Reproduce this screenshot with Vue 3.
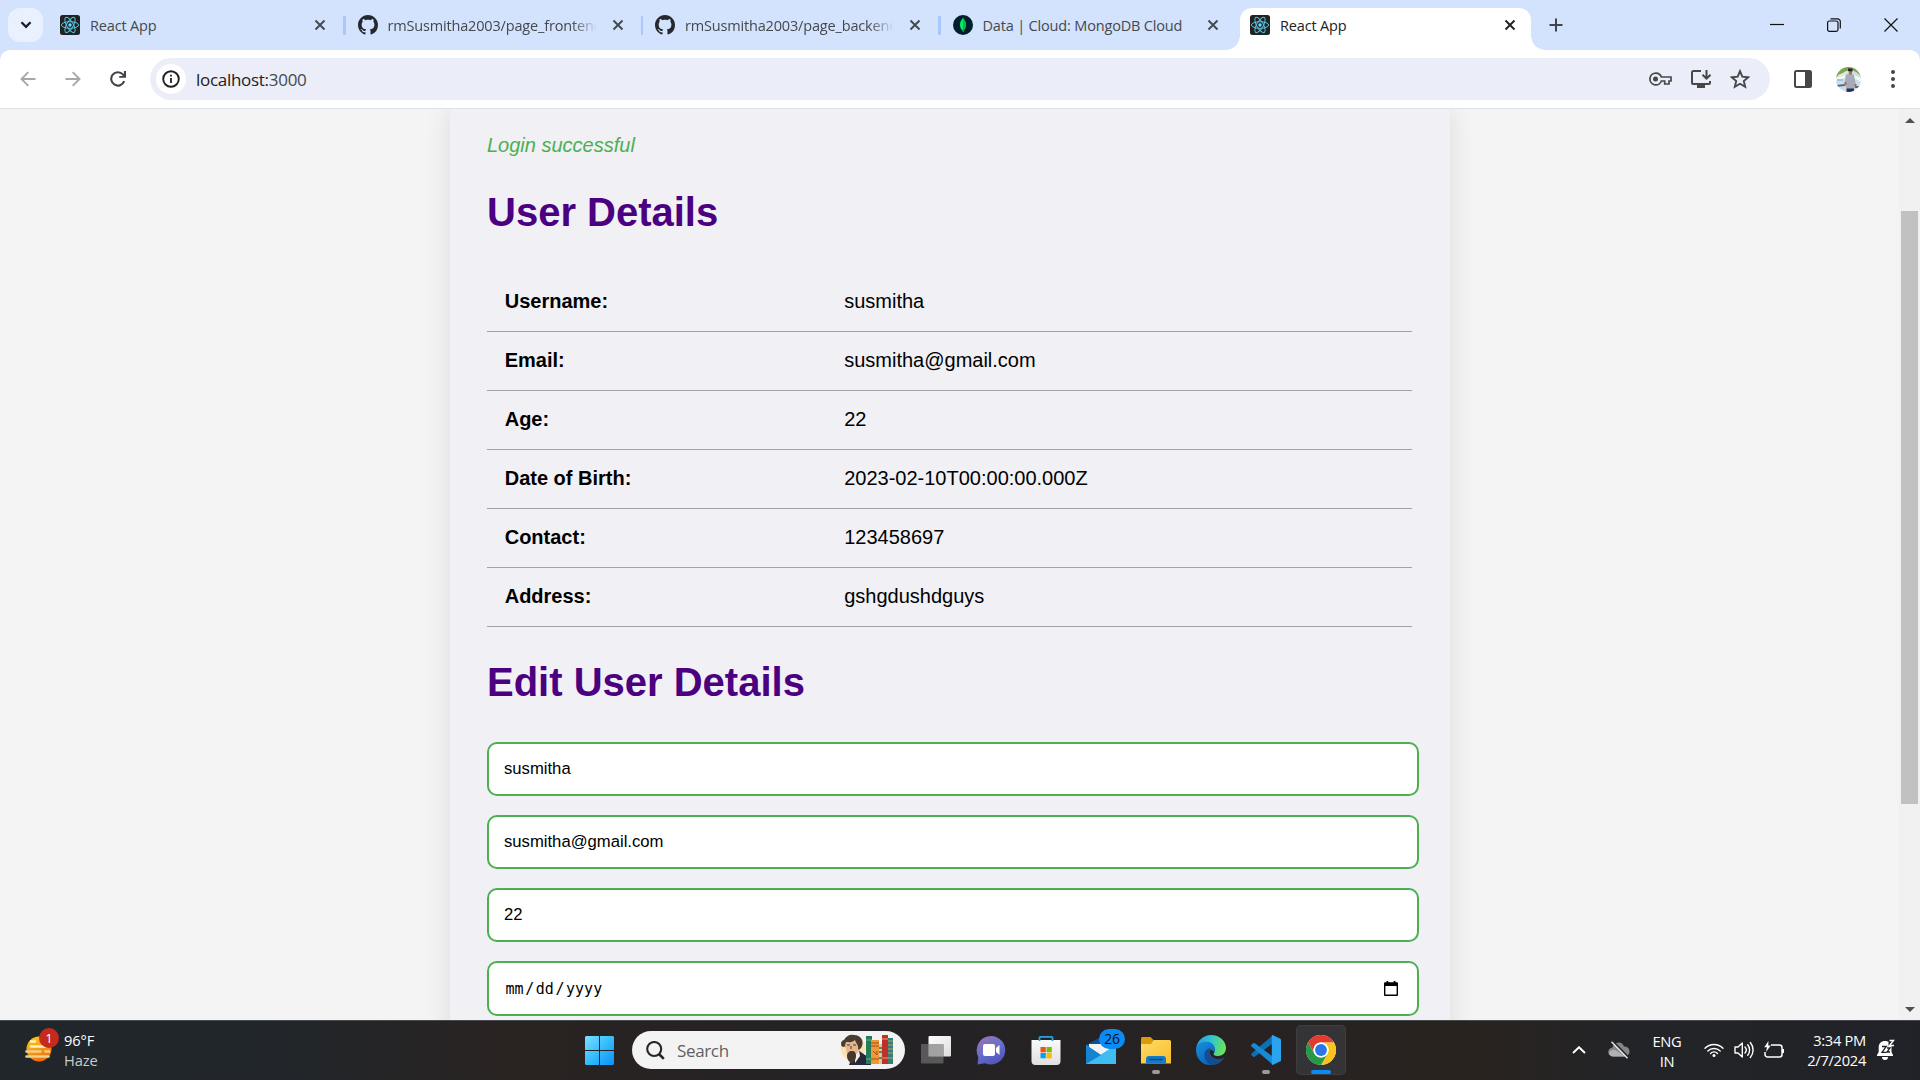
<script setup>
const tabs = [
  { icon: 'react', title: 'React App' },
  { icon: 'github', title: 'rmSusmitha2003/page_frontend', long: true },
  { icon: 'github', title: 'rmSusmitha2003/page_backend', long: true },
  { icon: 'mongo', title: 'Data | Cloud: MongoDB Cloud' },
  { icon: 'react', title: 'React App', active: true },
]

const details = [
  ['Username:', 'susmitha'],
  ['Email:', 'susmitha@gmail.com'],
  ['Age:', '22'],
  ['Date of Birth:', '2023-02-10T00:00:00.000Z'],
  ['Contact:', '123458697'],
  ['Address:', 'gshgdushdguys'],
]

const fields = ['susmitha', 'susmitha@gmail.com', '22']
</script>

<template>
  <div class="screen">
    <header class="tabstrip">
      <button class="tab-search">
        <svg width="12" height="8" viewBox="0 0 12 8"><path d="M1.5 1.3 6 5.8l4.5-4.5" fill="none" stroke="#1b1d21" stroke-width="2.3" /></svg>
      </button>
      <div class="tabs">
        <div v-for="(tab, i) in tabs" :key="i" class="tab" :class="{ active: tab.active, divided: i < 3 }">
          <svg v-if="tab.icon === 'react'" class="favicon" viewBox="0 0 20 20">
            <rect width="20" height="20" rx="2.5" fill="#222" />
            <g fill="none" stroke="#53c1de" stroke-width="1">
              <ellipse cx="10" cy="10" rx="8.6" ry="3.3" />
              <ellipse cx="10" cy="10" rx="8.6" ry="3.3" transform="rotate(60 10 10)" />
              <ellipse cx="10" cy="10" rx="8.6" ry="3.3" transform="rotate(120 10 10)" />
            </g>
            <circle cx="10" cy="10" r="1.7" fill="#61dafb" />
          </svg>
          <svg v-else-if="tab.icon === 'github'" class="favicon" viewBox="0 0 16 16">
            <path fill="#24292f" d="M8 0C3.58 0 0 3.58 0 8c0 3.54 2.29 6.53 5.47 7.59.4.07.55-.17.55-.38 0-.19-.01-.82-.01-1.49-2.01.37-2.53-.49-2.69-.94-.09-.23-.48-.94-.82-1.13-.28-.15-.68-.52-.01-.53.63-.01 1.08.58 1.23.82.72 1.21 1.87.87 2.33.66.07-.52.28-.87.51-1.07-1.78-.2-3.64-.89-3.64-3.95 0-.87.31-1.59.82-2.15-.08-.2-.36-1.02.08-2.12 0 0 .67-.21 2.2.82.64-.18 1.32-.27 2-.27s1.36.09 2 .27c1.53-1.04 2.2-.82 2.2-.82.44 1.1.16 1.92.08 2.12.51.56.82 1.27.82 2.15 0 3.07-1.87 3.75-3.65 3.95.29.25.54.73.54 1.48 0 1.07-.01 1.93-.01 2.2 0 .21.15.46.55.38A8.01 8.01 0 0 0 16 8c0-4.42-3.58-8-8-8" />
          </svg>
          <svg v-else class="favicon" viewBox="0 0 20 20">
            <circle cx="10" cy="10" r="10" fill="#001e2b" />
            <path d="M10 2.8c.4 1.2 3 3 3 7.1 0 2.6-1 4.3-2.5 5.400L10.300 17h-.6l-.2-1.700C8 14.200 7 12.500 7 9.900c0-4.100 2.600-5.900 3-7.100z" fill="#00ed64" />
            <path d="M10 2.800c.4 1.200 3 3 3 7.100 0 2.600-1 4.300-2.500 5.400L10.300 17H10z" fill="#00b84c" />
          </svg>
          <span class="tab-title" :class="{ fade: tab.long }">{{ tab.title }}</span>
          <svg class="tab-close" viewBox="0 0 12 12"><path d="m1.500 1.500 9 9m0-9-9 9" fill="none" stroke="currentColor" stroke-width="1.900" /></svg>
        </div>
      </div>
      <svg class="new-tab" width="14" height="14" viewBox="0 0 14 14"><path d="M7 .5v13M.5 7h13" stroke="#40444a" stroke-width="2" /></svg>
      <div class="window-controls">
        <svg width="14" height="14" viewBox="0 0 14 14"><path d="M0 6.500h14" stroke="#111" stroke-width="1.200" /></svg>
        <svg width="14" height="14" viewBox="0 0 14 14" fill="none" stroke="#111" stroke-width="1.200"><rect x=".6" y="3" width="10.400" height="10.400" rx="1.800" /><path d="M3.500.8h7a2.800 2.800 0 0 1 2.800 2.800v7" /></svg>
        <svg width="14" height="14" viewBox="0 0 14 14"><path d="m.5.5 13 13m0-13-13 13" stroke="#111" stroke-width="1.200" /></svg>
      </div>
    </header>

    <nav class="toolbar">
      <div class="nav-buttons">
        <svg width="16" height="16" viewBox="0 0 16 16" fill="none" stroke="#a7a8aa" stroke-width="1.900"><path d="M15.500 8H1.700M8.300 1.200 1.500 8l6.800 6.800" /></svg>
        <svg width="16" height="16" viewBox="0 0 16 16" fill="none" stroke="#a7a8aa" stroke-width="1.900"><path d="M.5 8h13.800M7.700 1.200 14.500 8l-6.800 6.800" /></svg>
        <svg width="16" height="16" viewBox="0 0 16 16"><path d="M14.200 10.200A6.700 6.700 0 1 1 12.900 3.400L14.300 5" fill="none" stroke="#3f4247" stroke-width="2.100" /><path d="M16 0v6.800H9.200V4.900h4.700V0z" fill="#3f4247" /></svg>
      </div>
      <div class="omnibox">
        <span class="site-info">
          <svg width="18" height="18" viewBox="0 0 18 18"><circle cx="9" cy="9" r="7.800" fill="none" stroke="#1f2023" stroke-width="1.900" /><path d="M9 8v5M9 4.700v1.900" stroke="#1f2023" stroke-width="1.800" /></svg>
        </span>
        <span class="url"><b>localhost:</b>3000</span>
        <div class="omni-actions">
          <svg width="23" height="14" viewBox="0 0 23 14"><path d="M7 1.100a5.900 5.900 0 1 0 5.400 7.900h3.300v3h4.300V9h2V5H12.400A5.900 5.900 0 0 0 7 1.100z" fill="none" stroke="#474747" stroke-width="1.700" /><circle cx="6.500" cy="7" r="2.500" fill="#474747" /></svg>
          <svg width="22" height="20" viewBox="0 0 22 20"><path d="M11 2H3.200A1.300 1.300 0 0 0 2 3.300v10.400A1.300 1.300 0 0 0 3.200 15h15.600a1.300 1.300 0 0 0 1.200-1.300V12" fill="none" stroke="#474747" stroke-width="2" /><path d="M7 15h8v4H7z" fill="#474747" /><path d="M16.500 1v8M12.500 5.700l4 4 4-4" fill="none" stroke="#474747" stroke-width="2" /></svg>
          <svg width="20" height="20" viewBox="0 0 20 20"><path d="m10 2.200 2.300 5.500 6 .5-4.500 3.900 1.400 5.800L10 14.800l-5.200 3.100 1.400-5.800L1.700 8.200l6-.5z" fill="none" stroke="#474747" stroke-width="1.900" /></svg>
        </div>
      </div>
      <div class="browser-actions">
        <svg width="18" height="18" viewBox="0 0 18 18"><rect x="1" y="1" width="16" height="16" rx="1.500" fill="none" stroke="#474747" stroke-width="2" /><path d="M11 1h6v16h-6z" fill="#474747" /></svg>
        <svg class="avatar" width="25" height="25" viewBox="0 0 25 25">
          <clipPath id="avatar-clip"><circle cx="12.500" cy="12.500" r="12.500" /></clipPath>
          <g clip-path="url(#avatar-clip)">
            <rect width="25" height="25" fill="#cfdde6" />
            <path d="M0 0h25v9l-5-4-4-2-6 1-10 6z" fill="#7fa64a" />
            <path d="M2 8l10-4v2L2 11z" fill="#dfe9cf" />
            <path d="M0 11l9-3v3l-9 3zM18 8l7 3v4l-7-4z" fill="#f2f6f9" />
            <path d="M1 12h6v2H1z" fill="#9fc6dc" />
            <path d="M0 18l9-1v2l-9 1zM19 19h6v2h-6z" fill="#4d6a88" />
            <path d="M10 8l4-1.500L18 8l2 10-2 4h-7.500l-2-6z" fill="#a6abba" />
            <path d="M10.500 21.500h7.500V25h-7.500z" fill="#1f3158" />
            <path d="M12.500 3h3.500v4.500h-3zM8.500 15h2v3h-2zM18.500 17h2v2.500h-2z" fill="#a86e58" />
            <path d="M12 1.500h4.500v3L12 4z" fill="#2c2226" />
          </g>
        </svg>
        <svg width="4" height="18" viewBox="0 0 4 18" fill="#474747"><circle cx="2" cy="2" r="2" /><circle cx="2" cy="9" r="2" /><circle cx="2" cy="16" r="2" /></svg>
      </div>
    </nav>

    <main class="viewport">
      <div class="page">
        <section class="card">
          <p class="message">Login successful</p>
          <h1>User Details</h1>
          <div class="details">
            <div v-for="row in details" :key="row[0]" class="detail-row">
              <strong>{{ row[0] }}</strong>
              <span>{{ row[1] }}</span>
            </div>
          </div>
          <h1 class="edit-heading">Edit User Details</h1>
          <div class="form">
            <div v-for="f in fields" :key="f" class="field">{{ f }}</div>
            <div class="field date">
              <span class="date-text"><span>mm</span><i>/</i><span>dd</span><i>/</i><span>yyyy</span></span>
              <svg width="14" height="15" viewBox="0 0 14 15"><path d="M2.500 0h1.800v1.200h5.400V0h1.800v1.200H13a1 1 0 0 1 1 1V14a1 1 0 0 1-1 1H1a1 1 0 0 1-1-1V2.200a1 1 0 0 1 1-1h1.500zM1.400 5v8.600h11.200V5z" fill="#000" fill-rule="evenodd" /></svg>
            </div>
          </div>
        </section>
      </div>
      <aside class="scrollbar">
        <svg width="10" height="5" viewBox="0 0 10 5"><path d="M5 0l5 5H0z" fill="#505050" /></svg>
        <div class="thumb"></div>
        <svg width="10" height="5" viewBox="0 0 10 5"><path d="M0 0h10L5 5z" fill="#505050" /></svg>
      </aside>
    </main>

    <footer class="taskbar">
      <div class="weather">
        <div class="weather-icon">
          <svg width="28" height="28" viewBox="0 0 28 28">
            <defs><linearGradient id="sun" x1="0" y1="0" x2=".4" y2="1"><stop offset="0" stop-color="#ffd21c" /><stop offset="1" stop-color="#f2700c" /></linearGradient></defs>
            <circle cx="15" cy="14" r="12.500" fill="url(#sun)" />
            <g stroke-width="2.600" stroke-linecap="round"><path d="M7 6.500h4M7 11.500h14" stroke="#fff2bd" /><path d="M2.500 16.500h14M21.500 16.500h3.500M2.500 21.500h22" stroke="#ecd08d" /></g>
          </svg>
          <span class="alert-badge">1</span>
        </div>
        <div class="weather-text"><span>96°F</span><span class="dim">Haze</span></div>
      </div>

      <div class="apps">
        <svg class="start" width="29" height="29" viewBox="0 0 29 29">
          <defs><linearGradient id="win" gradientUnits="userSpaceOnUse" x1="0" y1="0" x2="29" y2="29"><stop offset="0" stop-color="#7be0ff" /><stop offset=".5" stop-color="#35bdfb" /><stop offset="1" stop-color="#0a90fa" /></linearGradient></defs>
          <path d="M1 0h13v14H0V1zM15 0h13l1 1v13H15zM0 15h14v14H1l-1-1zM15 15h14v13l-1 1H15z" fill="url(#win)" />
        </svg>
        <div class="search">
          <svg width="19" height="19" viewBox="0 0 19 19"><circle cx="8.200" cy="8" r="7" fill="none" stroke="#25282b" stroke-width="2.100" /><path d="m13 13 4.800 4.800" stroke="#25282b" stroke-width="2.600" /></svg>
          <span>Search</span>
          <svg class="search-art" width="54" height="32" viewBox="0 0 54 32">
            <circle cx="13" cy="14" r="12.500" fill="#fbe2b6" />
            <path d="M9 31l3-8 6-7 7 5 6 3v7z" fill="#242a3c" />
            <path d="M15 19l4-3 1 6-5 7z" fill="#f4f0e8" />
            <path d="M5 7l7-4 7 4 1 9-6 7-7-2-1-6-1-2z" fill="#e6b78f" />
            <path d="M1 10c0-3 2-4 3-4 2-4 6-6 10-5 7 0 10 6 8 11-1 3-3 4-4 3 1-4-2-5-3-9-3 3-6 2-9 2-1 3-1 5-2 5-2 0-3-1-3-3z" fill="#4a3c2f" />
            <path d="M7 22c0-3 2-5 5-5s4 2 4 5-2 7-4 7-5-3-5-7z" fill="#46382c" />
            <path d="M7 11h3M13 11h3M11 12v3" stroke="#4a3328" stroke-width="1" />
            <path d="M26 2h6v28h-6z" fill="#237c5c" /><path d="M26 6h6M26 25h6" stroke="#73b18c" />
            <path d="M31 6h8v24h-8z" fill="#ef9837" /><path d="M31 9h8M31 12h8M31 25h8M33 17l4 4m0-4v4" stroke="#9b5424" />
            <path d="M39 10h4v20h-4z" fill="#dcc894" /><path d="M39 14h4M39 18h4M39 24h4" stroke="#53895d" stroke-width="2" />
            <path d="M42 1h6v29h-6z" fill="#bd302b" /><path d="M42 5h6M42 24h6" stroke="#f0a05c" />
            <path d="M48 4h5v26h-5z" fill="#337e7a" /><path d="M48 7h5M48 11h5M48 15h5M48 19h5M48 24h5" stroke="#b8a75c" />
          </svg>
        </div>

        <div class="app"><svg width="30" height="30" viewBox="0 0 30 30">
          <defs><linearGradient id="tv" x1="0" y1="0" x2="1" y2="1"><stop stop-color="#fff" /><stop offset="1" stop-color="#dcdcdc" /></linearGradient></defs>
          <rect x="7.500" y="1" width="22.500" height="20.500" rx="1" fill="url(#tv)" /><rect y="9" width="22.500" height="19.500" rx="1" fill="#606060" fill-opacity=".88" /><path d="M7.500 9h15v12.500h-15z" fill="#a2a2a2" />
        </svg></div>

        <div class="app"><svg width="30" height="30" viewBox="0 0 30 30">
          <defs><linearGradient id="chat" x1=".2" y1="0" x2=".7" y2="1"><stop stop-color="#9b72b4" /><stop offset=".5" stop-color="#6570cb" /><stop offset="1" stop-color="#5150ba" /></linearGradient></defs>
          <path d="M15 1a14.300 14.300 0 1 1-6 27.300L1.500 29.500 2.300 22A14.300 14.300 0 0 1 15 1z" fill="url(#chat)" /><rect x="7" y="9" width="12" height="12" rx="2" fill="#fff" /><path d="M20 13l3.500-3v10L20 17z" fill="#fff" />
        </svg></div>

        <div class="app"><svg width="30" height="30" viewBox="0 0 30 30">
          <defs><linearGradient id="store" x1="0" y1="0" x2="0" y2="1"><stop stop-color="#fafafa" /><stop offset="1" stop-color="#dfdfdf" /></linearGradient></defs>
          <path d="M.5 5h29v21a4 4 0 0 1-4 4h-21a4 4 0 0 1-4-4z" fill="url(#store)" /><path d="M8.500 6V2.800c0-.6.300-.9.900-.9h11.200c.6 0 .9.300.9.900V6" fill="none" stroke="#27a4dd" stroke-width="1.800" />
          <path d="M9.500 12h5.300v5.300H9.500z" fill="#f25022" /><path d="M15.500 12h5.300v5.300h-5.300z" fill="#7fba00" /><path d="M9.500 18h5.300v5.300H9.500z" fill="#00a4ef" /><path d="M15.500 18h5.300v5.300h-5.300z" fill="#ffb900" />
        </svg></div>

        <div class="app"><svg width="30" height="30" viewBox="0 0 30 30">
          <path d="M0 10 15 2l15 8v5H0z" fill="#0e5098" /><path d="M3 9h24v10l-12 3L3 14z" fill="#f3f3f3" /><path d="M0 10l15 10 15-10v19H0z" fill="#28a8ea" /><path d="M0 29 30 10v19z" fill="#3fbcf2" /><path d="M0 10l15 10L0 29z" fill="#1683d0" />
        </svg><span class="mail-badge">26</span></div>

        <div class="app"><svg width="30" height="30" viewBox="0 0 30 30">
          <defs><linearGradient id="folder" x1="0" y1="0" x2="1" y2="1"><stop stop-color="#ffdc69" /><stop offset="1" stop-color="#f9bd2a" /></linearGradient></defs>
          <path d="M0 3.500A1.500 1.500 0 0 1 1.500 2h8l3.500 3.500V12H0z" fill="#d99b08" /><path d="M0 9h10l3-4h15.500A1.500 1.500 0 0 1 30 6.500v22H0z" fill="url(#folder)" /><path d="M5 28.500V24a3 3 0 0 1 3-3h14a3 3 0 0 1 3 3v4.500z" fill="#147ac8" /><path d="M9 24.500h12" stroke="#0a4a86" stroke-width="1.500" stroke-linecap="round" />
        </svg><i class="dot"></i></div>

        <div class="app"><svg width="30" height="30" viewBox="0 0 30 30">
          <defs>
            <linearGradient id="edge-a" x1="0" y1=".2" x2="1" y2=".4"><stop stop-color="#2a9bde" /><stop offset=".5" stop-color="#31c5cf" /><stop offset="1" stop-color="#6be35a" /></linearGradient>
            <linearGradient id="edge-b" x1="0" y1="0" x2=".6" y2="1"><stop stop-color="#1791dc" /><stop offset="1" stop-color="#0b62b8" /></linearGradient>
          </defs>
          <path d="M.3 13C1.300 5.500 7.500 0 15 0c9 0 15 6.500 15 13 0 5-3.800 8-8 8-3.500 0-5.300-1.200-4-3 2.400-3.700-.8-8-6-8C6 10 1.500 12 .3 13z" fill="url(#edge-a)" />
          <path d="M0 15c0-5 4.500-8.500 9.500-8.500 5.500 0 9.500 3.500 9.500 7.500 0 2-1 3-1 3-2-4-8-2-8 4 0 4 2.500 7.500 6 9C7 31 0 24 0 15z" fill="url(#edge-b)" />
          <path d="M8.500 20c0-4.500 3-7 6.500-6.500-3 3.500 0 10.500 7.500 10.500 2.500 0 4.500-.8 6-1.800C26.500 26.500 21.500 30 16 30c-4-1.200-7.500-5-7.500-10z" fill="#154c92" />
        </svg></div>

        <div class="app"><svg width="30" height="30" viewBox="0 0 30 30">
          <path d="M22.200 8 3.800 21.800a1.300 1.300 0 0 1-1.600 0L.5 20.200a1.200 1.200 0 0 1 0-1.700L21.500.6 24 4z" fill="#0b70b7" /><path d="M22.200 22 3.800 8.200a1.300 1.300 0 0 0-1.600 0L.5 9.800a1.200 1.200 0 0 0 0 1.700l21 17.900L24 26z" fill="#148bd4" /><path d="M22 .2l7 3.200a1.700 1.700 0 0 1 1 1.600v20a1.700 1.700 0 0 1-1 1.600l-7 3.200c-.8.300-1.200 0-1.200-.8V1c0-.8.400-1.100 1.200-.8z" fill="#2aa4f1" />
        </svg><i class="dot"></i></div>

        <div class="app current"><svg width="30" height="30" viewBox="0 0 48 48">
          <circle cx="24" cy="24" r="24" fill="#fff" />
          <path d="M3.200 12A24 24 0 0 1 44.800 12H24A12 12 0 0 0 13.600 30z" fill="#e33b2e" />
          <path d="M44.800 12A24 24 0 0 1 24 48L34.400 30A12 12 0 0 0 24 12z" fill="#fcc31d" />
          <path d="M24 48A24 24 0 0 1 3.200 12L13.600 30A12 12 0 0 0 34.400 30z" fill="#279847" />
          <circle cx="24" cy="24" r="12" fill="#fff" /><circle cx="24" cy="24" r="9.500" fill="#2a75e8" />
        </svg><i class="bar"></i></div>
      </div>

      <div class="tray">
        <svg width="14" height="8" viewBox="0 0 14 8"><path d="m1 7 6-5.800L13 7" fill="none" stroke="#fff" stroke-width="1.900" /></svg>
        <svg class="cloud" width="22" height="18" viewBox="0 0 22 18"><path d="M5 15.500a4.500 4.500 0 0 1-.5-9A6 6 0 0 1 16 5.500a5 5 0 0 1 1 10z" fill="#858585" /><path d="M1 12c2-4 5-4 8-2l8 5.500H5A4.500 4.500 0 0 1 1 12z" fill="#b1b1b1" /><path d="m5 .5 15.500 16" stroke="#222428" stroke-width="2" /><path d="m3.500.8 16 16.500" stroke="#e8e8e8" stroke-width="1.500" /></svg>
        <div class="lang"><span>ENG</span><span>IN</span></div>
        <div class="status">
          <svg width="20" height="16" viewBox="0 0 20 16" fill="none" stroke="#fff" stroke-width="1.400" stroke-linecap="round"><path d="M1 6.200a12.700 12.700 0 0 1 18 0M3.800 9a8.800 8.800 0 0 1 12.400 0M6.500 11.500a5 5 0 0 1 7 0" /><circle cx="10" cy="13.500" r="1.500" fill="#fff" stroke="none" /></svg>
          <svg width="20" height="18" viewBox="0 0 20 18" fill="none" stroke="#fff" stroke-width="1.400" stroke-linecap="round" stroke-linejoin="round"><path d="M1 6h3l4.300-4v14L4 12H1zM11 6a4.500 4.500 0 0 1 0 6M13.700 3.800a8 8 0 0 1 0 10.400M16.300 1.500a11.500 11.500 0 0 1 0 15" /></svg>
          <svg width="20" height="18" viewBox="0 0 20 18"><path d="M7 4h8.500A2.500 2.500 0 0 1 18 6.500v7a2.500 2.500 0 0 1-2.500 2.500h-12A2.500 2.500 0 0 1 1 13.500V11" fill="none" stroke="#fff" stroke-width="1.500" /><path d="M18 8h2v4h-2z" fill="#fff" /><path d="M4.500 0 .3 6.200H3L2 11l4.700-6.500H4.200z" fill="#fff" /></svg>
        </div>
        <div class="clock"><span>3:34 PM</span><span>2/7/2024</span></div>
        <div class="bell">
          <svg width="18" height="21" viewBox="0 0 18 21"><path d="M8 2c1.500 0 2.500.3 3.500.8V7h3V13l1.500 3v1H0v-1l1.700-3V8.500C1.700 4.600 4 2 8 2zM5 18h6a3 3 0 0 1-6 0z" fill="#fff" /><path d="M5 7.500h4.300L5 13.300h4.500M10 9h3l-3 4h3" fill="none" stroke="#222428" stroke-width="1.300" /><path d="M12.500 1.500h4l-4 5h4.500" fill="none" stroke="#fff" stroke-width="1.400" /></svg>
        </div>
      </div>
    </footer>
  </div>
</template>

<style>
body { margin: 0; overflow: hidden; }
</style>

<style scoped>
.screen {
  display: flex; flex-direction: column; width: 1920px; height: 1080px; overflow: hidden;
  font-family: "Open Sans", "Noto Sans", sans-serif; background: #d3e3fd;
}
svg { display: block; flex: none; }

.tabstrip { display: flex; height: 50px; flex: none; background: #d3e3fd; }
.tab-search {
  width: 35px; height: 34px; margin: 8px 7px 0 8px; padding: 0; border: 0; border-radius: 12px;
  background: #e9f1fe; display: flex; align-items: center; justify-content: center;
}
.tabs { display: flex; height: 50px; }
.tab {
  position: relative; box-sizing: border-box; width: 297.500px; height: 42px; margin-top: 8px;
  padding: 0 21.500px 8px 10px; display: flex; align-items: center; color: #45484d;
}
.tab.divided::after {
  content: ""; position: absolute; right: 2px; top: 8px; width: 2.500px; height: 19px; border-radius: 1px; background: #a8c7fa;
}
.tab.active { width: 291px; background: #fff; border-radius: 12px 12px 0 0; padding-right: 15px; color: #202226; }
.tab.active::before, .tab.active::after { content: ""; position: absolute; bottom: 0; width: 14px; height: 14px; }
.tab.active::before { left: -14px; background: radial-gradient(circle at 0 0, transparent 13.500px, #fff 14px); }
.tab.active::after { right: -14px; background: radial-gradient(circle at 100% 0, transparent 13.500px, #fff 14px); }
.favicon { width: 20px; height: 20px; margin-right: 10px; }
.tab-title {
  font-size: 14.500px; letter-spacing: -.17px; line-height: 20px; padding-top: 2px;
  white-space: nowrap; overflow: hidden; width: 209px; margin-right: auto;
}
.tab-title.fade { -webkit-mask-image: linear-gradient(90deg, #000 88%, transparent 100%); mask-image: linear-gradient(90deg, #000 88%, transparent 100%); }
.tab-close { width: 12px; height: 12px; }
.new-tab { margin: 18px 0 0 17.500px; }
.window-controls { display: flex; gap: 43px; margin: 18px 22px 0 auto; }

.toolbar {
  display: flex; align-items: center; box-sizing: border-box; height: 59px; flex: none; background: #fff;
  border-bottom: 1px solid #dfe1e4; border-radius: 10px 10px 0 0; padding: 0 25.500px 0 19.500px;
}
.nav-buttons { display: flex; gap: 29px; width: 130.500px; }
.omnibox {
  display: flex; align-items: center; box-sizing: border-box; width: 1620px; height: 42px; padding: 0 20px 0 6px;
  border-radius: 21px; background: #ebeef8;
}
.site-info { width: 30px; height: 30px; border-radius: 50%; background: #fff; display: flex; align-items: center; justify-content: center; }
.url { margin-left: 10px; padding-top: 2px; font-size: 17px; line-height: 24px; letter-spacing: -.29px; color: #45484d; }
.url b { font-weight: 400; color: #1f2023; }
.omni-actions { display: flex; align-items: center; gap: 18px; margin-left: auto; }
.browser-actions { display: flex; align-items: center; margin-left: auto; }
.avatar { margin: 0 30px 0 24px; }

.viewport { display: flex; height: 911px; flex: none; overflow: hidden; background: #f4f4f4; font-family: "Liberation Sans", Arial, sans-serif; }
.page { width: 1899px; overflow: hidden; }
.card {
  box-sizing: border-box; width: 1000px; height: 1100px; margin: 0 auto; padding: 24px 37.500px 0;
  background: #f0f0f5; box-shadow: 0 0 25px rgba(0, 0, 0, .1);
}
.message { margin: 0 0 32px; font-size: 20px; line-height: 24px; font-style: italic; color: #4caf50; }
h1 { margin: 0 0 38px; font-size: 40px; line-height: 46px; color: #4b0082; }
h1.edit-heading { margin: 32px 0 37px; }
.detail-row {
  display: grid; grid-template-columns: 339.500px 1fr; box-sizing: border-box; height: 59px; padding: 16px 17.700px;
  border-bottom: 1px solid #a3a3a6; font-size: 20px; line-height: 24px; color: #000;
}
.form { display: flex; flex-direction: column; gap: 19px; width: 932px; }
.field {
  box-sizing: border-box; height: 54px; padding: 0 15px; border: 2px solid #4caf50; border-radius: 10px;
  background: #fff; font-size: 16.670px; line-height: 49px; color: #000;
}
.field.date { display: flex; align-items: center; justify-content: space-between; height: 55px; padding-right: 19.500px; }
.date-text { display: flex; gap: 1.600px; margin-left: 1.500px; font-family: "DejaVu Sans Mono", monospace; font-size: 15px; line-height: 20px; }
.date-text i { font-style: normal; }

.scrollbar { box-sizing: border-box; width: 21px; background: #f1f1f1; padding: 9px 0 8px; display: flex; flex-direction: column; align-items: center; }
.thumb { width: 17px; height: 593px; margin: 88px 0 auto; background: #c1c1c1; }

.taskbar {
  display: flex; box-sizing: border-box; height: 60px; flex: none; border-top: 1px solid #474a4c; color: #fff;
  background: linear-gradient(90deg, #20262a 0%, #22262a 15%, #292321 27%, #242226 45%, #29231f 77%, #222428 85%, #202227 100%);
}
.weather { display: flex; width: 585px; }
.weather-icon { position: relative; margin: 14px 0 0 24px; width: 40px; }
.alert-badge {
  position: absolute; left: 15px; top: -7px; width: 20px; height: 20px; border-radius: 50%; background: #c42b1c;
  font-size: 13px; line-height: 20px; text-align: center;
}
.weather-text { display: flex; flex-direction: column; margin-top: 9px; font-size: 14.700px; line-height: 20px; letter-spacing: -.1px; }
.dim { color: #c9cacb; }
.apps { display: flex; }
.start { margin: 15px 18px 0 0; }
.search {
  display: flex; align-items: center; box-sizing: border-box; width: 273px; height: 38px; margin: 10px 6px 0 0;
  padding: 0 11px 0 14px; border-radius: 19px; background: #f3f3f3; color: #5f6163; font-size: 17px;
}
.search span { margin-left: 12px; letter-spacing: -.35px; }
.search-art { margin-left: auto; }
.app {
  position: relative; box-sizing: border-box; width: 50px; height: 50px; margin: 4px 0 0 5px; padding: 10px 10px 0;
  border-radius: 5px;
}
.search + .app { margin-left: 0; }
.current { background: #343335; box-shadow: inset 0 0 0 1px #3e3d3f; }
.dot, .bar { position: absolute; bottom: 1px; height: 4px; border-radius: 2px; }
.dot { left: 21px; width: 8px; background: #9a9a9b; }
.bar { left: 15px; width: 20px; background: #0a8bf8; }
.mail-badge {
  position: absolute; left: 23px; top: 4px; width: 26px; height: 20px; border-radius: 10px; background: #0a8cf7;
  color: #111; font-size: 14px; line-height: 20px; text-align: center; letter-spacing: -.3px;
}
.tray { display: flex; margin-left: auto; padding-right: 25px; font-size: 14.700px; line-height: 20px; letter-spacing: -.3px; }
.tray > svg { margin-top: 25px; }
.tray > .cloud { margin: 20px 0 0 22px; }
.lang { display: flex; flex-direction: column; align-items: center; width: 40px; margin: 10px 0 0 17px; }
.status { display: flex; align-items: center; gap: 10px; height: 58px; margin-left: 17px; }
.clock { display: flex; flex-direction: column; align-items: flex-end; width: 82px; margin-top: 9px; }
.bell { margin: 18px 0 0 11px; }
</style>
